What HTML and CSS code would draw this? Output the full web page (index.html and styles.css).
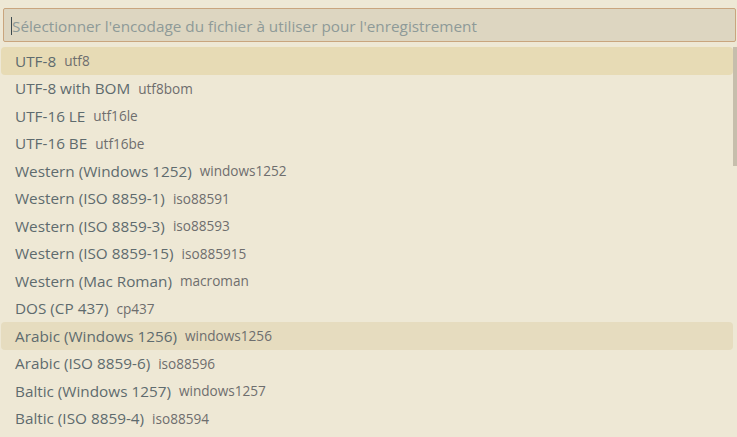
FILE: index.html
```html
<!DOCTYPE html>
<html lang="fr">
<head>
<meta charset="utf-8">
<link rel="stylesheet" href="styles.css">
</head>
<body>
<div class="quick-pick">
  <div class="input-wrap">
    <div class="input"><span class="caret"></span><span class="placeholder">Sélectionner l'encodage du fichier à utiliser pour l'enregistrement</span></div>
  </div>
  <div class="list">
    <div class="rows">
      <div class="row focused"><span class="label">UTF-8</span><span class="desc">utf8</span></div>
      <div class="row"><span class="label">UTF-8 with BOM</span><span class="desc">utf8bom</span></div>
      <div class="row"><span class="label">UTF-16 LE</span><span class="desc">utf16le</span></div>
      <div class="row"><span class="label">UTF-16 BE</span><span class="desc">utf16be</span></div>
      <div class="row"><span class="label">Western (Windows 1252)</span><span class="desc">windows1252</span></div>
      <div class="row"><span class="label">Western (ISO 8859-1)</span><span class="desc">iso88591</span></div>
      <div class="row"><span class="label">Western (ISO 8859-3)</span><span class="desc">iso88593</span></div>
      <div class="row"><span class="label">Western (ISO 8859-15)</span><span class="desc">iso885915</span></div>
      <div class="row"><span class="label">Western (Mac Roman)</span><span class="desc">macroman</span></div>
      <div class="row"><span class="label">DOS (CP 437)</span><span class="desc">cp437</span></div>
      <div class="row hover"><span class="label">Arabic (Windows 1256)</span><span class="desc">windows1256</span></div>
      <div class="row"><span class="label">Arabic (ISO 8859-6)</span><span class="desc">iso88596</span></div>
      <div class="row"><span class="label">Baltic (Windows 1257)</span><span class="desc">windows1257</span></div>
      <div class="row"><span class="label">Baltic (ISO 8859-4)</span><span class="desc">iso88594</span></div>
    </div>
    <div class="scrollbar"></div>
  </div>
</div>
</body>
</html>
```
FILE: styles.css
```css
html, body {
  margin: 0;
  padding: 0;
  background: #EEE8D5;
  overflow: hidden;
}
.quick-pick {
  width: 737px;
  height: 437px;
  font-family: "Open Sans", "Noto Sans", sans-serif;
  background: #EEE8D5;
  padding-top: 8px;
  box-sizing: border-box;
}
.input-wrap {
  padding: 0 1px 0 3px;
}
.input {
  height: 34px;
  box-sizing: border-box;
  border: 1px solid #C9A57E;
  border-radius: 2px;
  background: #DDD6C1;
  display: flex;
  align-items: center;
  padding-left: 7px;
  padding-top: 1px;
  font-size: 15.3px;
}
.caret {
  width: 1px;
  height: 18px;
  background: #3B4A50;
}
.placeholder {
  color: #8E9A98;
  white-space: nowrap;
}
.list {
  margin-top: 5px;
  display: flex;
}
.rows {
  flex: 1;
  padding-left: 1px;
}
.row {
  height: 27.5px;
  display: flex;
  align-items: center;
  padding-left: 14px;
  font-size: 15.3px;
  border-radius: 4px;
  white-space: nowrap;
}
.row.focused {
  background: #E7DBB5;
}
.row.hover {
  background: #E6DCBF;
}
.label {
  color: #5E6B6E;
}
.desc {
  color: #6E6E6E;
  margin-left: 8px;
  font-size: 13.6px;
}
.scrollbar {
  width: 4px;
  height: 119px;
  background: #C6BEAC;
}
```
